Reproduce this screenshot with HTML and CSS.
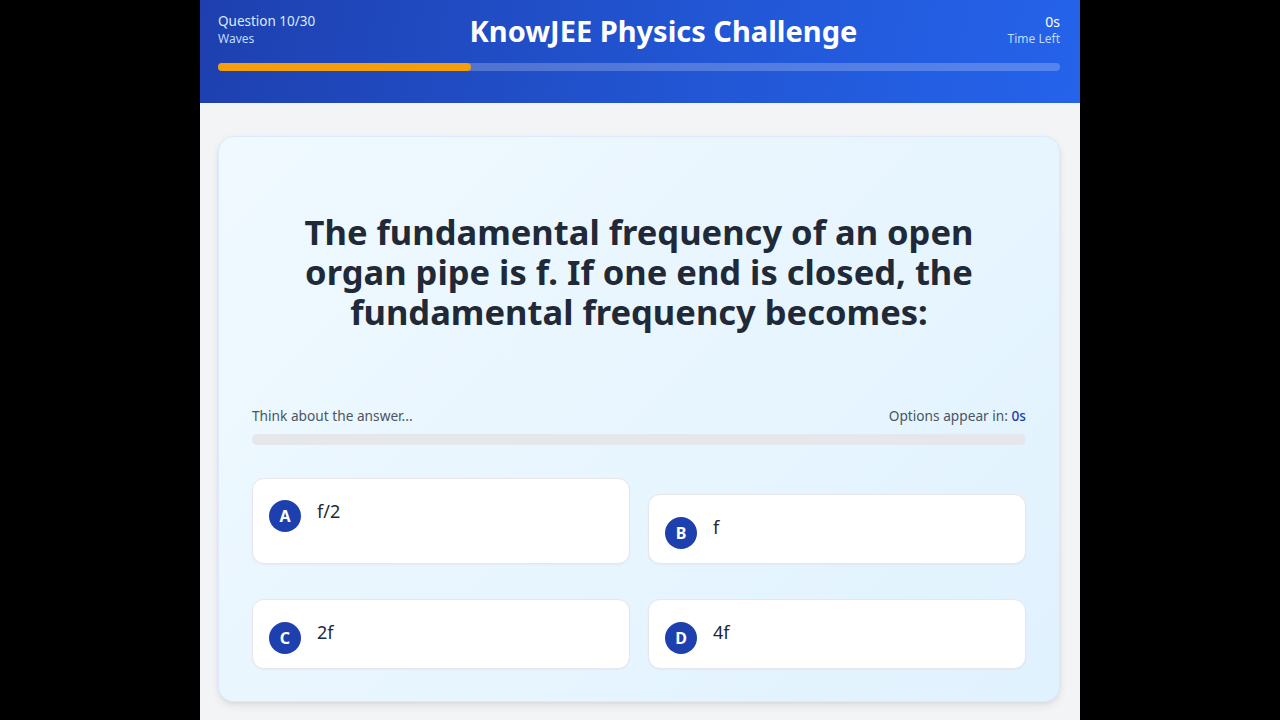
FILE: index.html
```html
<!DOCTYPE html>
<html lang="en">
<head>
    <meta charset="UTF-8">
    <meta name="viewport" content="width=device-width, initial-scale=1.0">
    <title>KnowJEE Physics Challenge</title>
    <link rel="stylesheet" href="styles.css">
</head>
<body>
    <div class="app">
        <header class="topBar">
            <div class="topRow">
                <div class="qInfo">
                    <div class="qCount">Question 10/30</div>
                    <div class="qTopic">Waves</div>
                </div>
                <h1 class="title">KnowJEE Physics Challenge</h1>
                <div class="timer">
                    <div class="timeVal">0s</div>
                    <div class="timeLabel">Time Left</div>
                </div>
            </div>
            <div class="quizProgress">
                <div class="quizFill" style="width: 30%"></div>
            </div>
        </header>

        <main class="content">
            <div class="card">
                <h2 class="question">The fundamental frequency of an open organ pipe is f. If one end is closed, the fundamental frequency becomes:</h2>

                <div class="thinkRow">
                    <span>Think about the answer...</span>
                    <span>Options appear in: <b class="count">0s</b></span>
                </div>
                <div class="thinkBar"></div>

                <ul class="options">
                    <li class="option first"><span class="letter">A</span><span class="optText">f/2</span></li>
                    <li class="option"><span class="letter">B</span><span class="optText">f</span></li>
                    <li class="option"><span class="letter">C</span><span class="optText">2f</span></li>
                    <li class="option"><span class="letter">D</span><span class="optText">4f</span></li>
                </ul>
            </div>
        </main>
    </div>
</body>
</html>
```

FILE: styles.css
```css
* {
    box-sizing: border-box;
    margin: 0;
    padding: 0;
}
body {
    background-color: #000;
    font-family: "Noto Sans", "Open Sans", sans-serif;
}
.app {
    width: 880px;
    height: 720px;
    margin: 0 auto;
    background-color: #f3f4f6;
    display: flex;
    flex-direction: column;
}
.topBar {
    height: 103px;
    padding: 12px 20px 0 18px;
    background: linear-gradient(100deg, #1e40af 0%, #2257d6 60%, #2563eb 100%);
    color: #fff;
}
.topRow {
    display: flex;
    justify-content: space-between;
    align-items: flex-start;
}
.qCount {
    font-size: 13.5px;
    line-height: 19px;
    color: #dbeafe;
}
.qTopic {
    font-size: 12px;
    line-height: 16px;
    color: #bfdbfe;
}
.title {
    font-size: 29px;
    line-height: 38px;
    font-weight: 700;
    margin-left: 4px;
}
.timer {
    text-align: right;
}
.timeVal {
    font-size: 14px;
    line-height: 19px;
}
.timeLabel {
    font-size: 12px;
    line-height: 16px;
    color: #bfdbfe;
}
.quizProgress {
    margin-top: 13px;
    height: 8px;
    border-radius: 4px;
    background-color: rgba(255, 255, 255, 0.22);
}
.quizFill {
    height: 100%;
    border-radius: 4px;
    background-color: #f59e0b;
}
.content {
    flex: 1;
    padding: 33px 20px 18px 18px;
}
.card {
    height: 566px;
    padding: 0 33px;
    border: 1px solid #dbeafe;
    border-radius: 16px;
    background: linear-gradient(135deg, #f0f9ff 0%, #e0f2fe 100%);
    box-shadow: 0 4px 8px rgba(0, 0, 0, 0.08), 0 1px 3px rgba(0, 0, 0, 0.06);
}
.question {
    max-width: 710px;
    margin: 75px auto 0;
    text-align: center;
    font-size: 34.5px;
    line-height: 40px;
    font-weight: 700;
    color: #1f2937;
}
.thinkRow {
    display: flex;
    justify-content: space-between;
    margin-top: 74px;
    font-size: 13.7px;
    line-height: 20px;
    color: #4b5563;
}
.count {
    color: #1e40af;
    font-weight: 500;
}
.thinkBar {
    margin-top: 8px;
    height: 11px;
    border-radius: 6px;
    background-color: #e5e7eb;
}
.options {
    list-style: none;
    display: grid;
    grid-template-columns: 1fr 1fr;
    column-gap: 18px;
    row-gap: 35px;
    align-items: end;
    margin-top: 33px;
}
.option {
    display: flex;
    align-items: flex-start;
    gap: 16px;
    height: 70px;
    padding: 21px 17px 0 16px;
    background-color: #fff;
    border: 1px solid #e5e7eb;
    border-radius: 12px;
    box-shadow: 0 1px 2px rgba(0, 0, 0, 0.04);
}
.option.first {
    height: 86px;
}
.letter {
    flex-shrink: 0;
    width: 32px;
    height: 32px;
    border-radius: 50%;
    background-color: #1e40af;
    color: #fff;
    font-size: 16px;
    font-weight: 700;
    display: flex;
    align-items: center;
    justify-content: center;
    margin-top: 1px;
}
.option.first .letter {
    margin-top: 0;
}
.optText {
    font-size: 18px;
    line-height: 22px;
    color: #1f2937;
}
```
